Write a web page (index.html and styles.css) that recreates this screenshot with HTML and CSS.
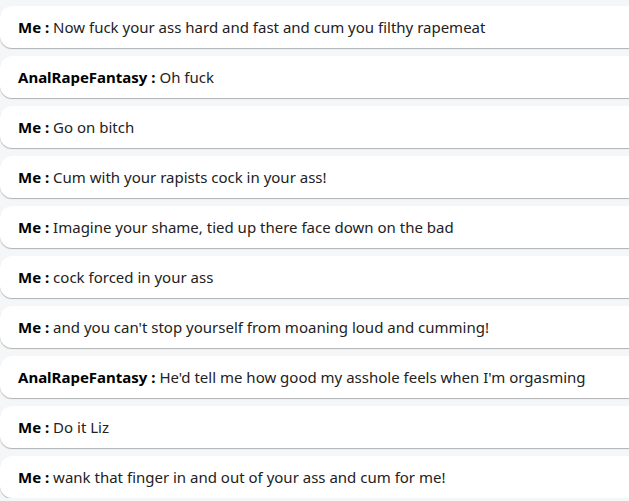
FILE: index.html
```html
<!DOCTYPE html>
<html>
<head>
<meta charset="utf-8">
<link rel="stylesheet" href="styles.css">
</head>
<body>
<div class="log">
  <div class="msg"><b>Me :</b> Now fuck your ass hard and fast and cum you filthy rapemeat</div>
  <div class="msg"><b>AnalRapeFantasy :</b> Oh fuck</div>
  <div class="msg"><b>Me :</b> Go on bitch</div>
  <div class="msg"><b>Me :</b> Cum with your rapists cock in your ass!</div>
  <div class="msg"><b>Me :</b> Imagine your shame, tied up there face down on the bad</div>
  <div class="msg"><b>Me :</b> cock forced in your ass</div>
  <div class="msg"><b>Me :</b> and you can't stop yourself from moaning loud and cumming!</div>
  <div class="msg"><b>AnalRapeFantasy :</b> He'd tell me how good my asshole feels when I'm orgasming</div>
  <div class="msg"><b>Me :</b> Do it Liz</div>
  <div class="msg"><b>Me :</b> wank that finger in and out of your ass and cum for me!</div>
</div>
</body>
</html>
```
FILE: styles.css
```css
html, body {
  margin: 0;
  padding: 0;
  background: #f5f6f8;
  overflow: hidden;
}
.log {
  display: flex;
  flex-direction: column;
  gap: 8px;
  padding-top: 6px;
  width: 660px;
}
.msg {
  height: 42px;
  box-sizing: border-box;
  display: flex;
  align-items: center;
  padding-left: 18px;
  background: #ffffff;
  border-radius: 12px;
  box-shadow: 0 1px 1px rgba(0,0,0,0.28);
  font-family: "Noto Sans", sans-serif;
  font-size: 15px;
  color: #222;
  white-space: pre;
}
.msg b {
  font-weight: 700;
  color: #000;
}
```
